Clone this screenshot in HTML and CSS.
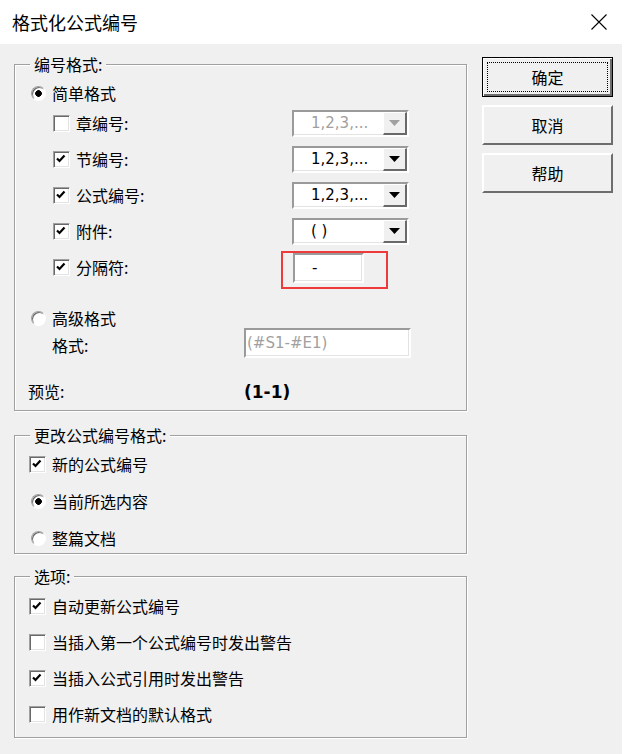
FILE: index.html
```html
<!DOCTYPE html>
<html lang="zh-CN">
<head>
  <meta charset="UTF-8">
  <title>格式化公式编号</title>
  <link rel="stylesheet" href="styles.css">
</head>
<body>
  <div class="dialog">
    <div class="titlebar">
      <span class="title">格式化公式编号</span>
      <svg class="close" width="16" height="16" viewBox="0 0 16 16">
        <path d="M0.5 0.5L15.5 15.5M15.5 0.5L0.5 15.5" stroke="#000" stroke-width="1.1" fill="none"/>
      </svg>
    </div>

    <div class="client">
      <div class="groups">

        <fieldset class="group g-format">
          <legend>编号格式:</legend>
          <div class="radio-row simple"><span class="radio on"></span>简单格式</div>

          <div class="opt-row">
            <div class="opt"><span class="check"></span>章编号:</div>
            <div class="combo disabled">
              <span class="combo-text">1,2,3,...</span>
              <span class="combo-btn"><svg width="11" height="6" viewBox="0 0 11 6"><polygon points="0,0 11,0 5.5,6"/></svg></span>
            </div>
          </div>

          <div class="opt-row">
            <div class="opt"><span class="check"><svg width="15" height="15" viewBox="0 0 15 15"><path d="M3 6.5L5.5 9L10.5 3.5"/></svg></span>节编号:</div>
            <div class="combo">
              <span class="combo-text">1,2,3,...</span>
              <span class="combo-btn"><svg width="11" height="6" viewBox="0 0 11 6"><polygon points="0,0 11,0 5.5,6"/></svg></span>
            </div>
          </div>

          <div class="opt-row">
            <div class="opt"><span class="check"><svg width="15" height="15" viewBox="0 0 15 15"><path d="M3 6.5L5.5 9L10.5 3.5"/></svg></span>公式编号:</div>
            <div class="combo">
              <span class="combo-text">1,2,3,...</span>
              <span class="combo-btn"><svg width="11" height="6" viewBox="0 0 11 6"><polygon points="0,0 11,0 5.5,6"/></svg></span>
            </div>
          </div>

          <div class="opt-row">
            <div class="opt"><span class="check"><svg width="15" height="15" viewBox="0 0 15 15"><path d="M3 6.5L5.5 9L10.5 3.5"/></svg></span>附件:</div>
            <div class="combo">
              <span class="combo-text">( )</span>
              <span class="combo-btn"><svg width="11" height="6" viewBox="0 0 11 6"><polygon points="0,0 11,0 5.5,6"/></svg></span>
            </div>
          </div>

          <div class="opt-row">
            <div class="opt"><span class="check"><svg width="15" height="15" viewBox="0 0 15 15"><path d="M3 6.5L5.5 9L10.5 3.5"/></svg></span>分隔符:</div>
            <div class="mark"><div class="textbox sep">-</div></div>
          </div>

          <div class="radio-row advanced"><span class="radio"></span>高级格式</div>
          <div class="field-row">
            <span class="field-label">格式:</span>
            <div class="textbox adv">(#S1-#E1)</div>
          </div>
          <div class="preview-row">
            <span class="preview-label">预览:</span>
            <span class="preview">(1-1)</span>
          </div>
        </fieldset>

        <fieldset class="group g-change">
          <legend>更改公式编号格式:</legend>
          <div class="row"><span class="check"><svg width="15" height="15" viewBox="0 0 15 15"><path d="M3 6.5L5.5 9L10.5 3.5"/></svg></span>新的公式编号</div>
          <div class="row"><span class="radio on"></span>当前所选内容</div>
          <div class="row"><span class="radio"></span>整篇文档</div>
        </fieldset>

        <fieldset class="group g-options">
          <legend>选项:</legend>
          <div class="row"><span class="check"><svg width="15" height="15" viewBox="0 0 15 15"><path d="M3 6.5L5.5 9L10.5 3.5"/></svg></span>自动更新公式编号</div>
          <div class="row"><span class="check"></span>当插入第一个公式编号时发出警告</div>
          <div class="row"><span class="check"><svg width="15" height="15" viewBox="0 0 15 15"><path d="M3 6.5L5.5 9L10.5 3.5"/></svg></span>当插入公式引用时发出警告</div>
          <div class="row"><span class="check"></span>用作新文档的默认格式</div>
        </fieldset>

      </div>

      <div class="buttons">
        <button class="btn default">确定</button>
        <button class="btn">取消</button>
        <button class="btn">帮助</button>
      </div>
    </div>
  </div>
</body>
</html>
```

FILE: styles.css
```css
* {
  box-sizing: border-box;
}

body {
  margin: 0;
  background: #fff;
  font-family: "Noto Sans CJK SC", sans-serif;
  font-size: 16px;
  line-height: 20px;
  color: #000;
}

.dialog {
  width: 622px;
  height: 754px;
  background: #f0f0f0;
  display: flex;
  flex-direction: column;
}

.titlebar {
  height: 44px;
  flex: none;
  background: #fff;
  display: flex;
  align-items: center;
  justify-content: space-between;
  padding: 0 15px 0 12px;
}

.title {
  font-size: 18px;
}

.close {
  display: block;
}

.client {
  flex: 1;
  display: flex;
  align-items: flex-start;
  padding-left: 14px;
}

.groups {
  width: 453px;
  display: flex;
  flex-direction: column;
}

/* group boxes */
.group {
  margin: 0;
  padding: 0;
  min-width: 0;
  border: 1px solid #a0a0a0;
  box-shadow: 1px 1px 0 #fff, inset 1px 1px 0 #fff;
}

.group legend {
  margin-left: 15px;
  padding: 0 4px;
  line-height: 20px;
  background: #f0f0f0;
}

.g-format {
  margin-top: 10px;
  padding: 7px 0 6px;
}

.g-change {
  margin-top: 14px;
  padding: 7px 0 3px;
  display: flex;
  flex-direction: column;
  gap: 13px;
}

.g-options {
  margin-top: 12px;
  padding: 8px 0 11px;
  display: flex;
  flex-direction: column;
  gap: 12px;
}

.row {
  height: 24px;
  display: flex;
  align-items: center;
  gap: 6px;
  padding-left: 14px;
}

.row .radio {
  margin-left: 2px;
}

/* first group rows */
.radio-row {
  display: flex;
  align-items: center;
  gap: 6px;
  padding-left: 16px;
}

.radio-row.simple {
  height: 24px;
}

.radio-row.advanced {
  height: 20px;
  margin-top: 23px;
}

.opt-row {
  height: 36px;
  display: flex;
  align-items: center;
}

.opt {
  width: 277px;
  flex: none;
  display: flex;
  align-items: center;
  gap: 6px;
  padding-left: 38px;
}

.field-row {
  height: 30px;
  display: flex;
  align-items: center;
}

.field-label {
  width: 229px;
  padding-left: 37px;
  padding-top: 4px;
}

.preview-row {
  height: 26px;
  margin-top: 20px;
  display: flex;
  align-items: center;
}

.preview-label {
  width: 229px;
  padding-left: 13px;
}

.preview {
  font-family: "DejaVu Sans", sans-serif;
  font-weight: bold;
  font-size: 17px;
  padding-top: 2px;
}

/* controls */
.check {
  width: 17px;
  height: 17px;
  flex: none;
  background: #fff;
  border: 1px solid;
  border-color: #a0a0a0 #fff #fff #a0a0a0;
  box-shadow: inset 1px 1px 0 #696969, inset -1px -1px 0 #e3e3e3;
}

.check svg {
  display: block;
}

.check path {
  fill: none;
  stroke: #000;
  stroke-width: 2.2;
}

.radio {
  width: 15px;
  height: 15px;
  flex: none;
  border-radius: 50%;
  background: #fff;
  border: 1px solid;
  border-color: #a0a0a0 #fff #fff #a0a0a0;
  box-shadow: inset 1px 1px 0 #696969;
}

.radio.on {
  background: radial-gradient(circle, #000 0 3px, #fff 3.6px);
}

.combo {
  width: 117px;
  height: 27px;
  display: flex;
  background: #fff;
  border: 2px solid;
  border-color: #9a9a9a #fff #fff #9a9a9a;
  box-shadow: inset -1px -1px 0 #e3e3e3;
}

.combo-text {
  flex: 1;
  padding-left: 17px;
  font-family: "DejaVu Sans", sans-serif;
  font-size: 15px;
  line-height: 23px;
}

.combo-btn {
  width: 24px;
  height: 23px;
  display: flex;
  align-items: center;
  justify-content: center;
  background: #f0f0f0;
  border-style: solid;
  border-width: 1px 2px 2px 1px;
  border-color: #fff #696969 #696969 #fff;
}

.combo-btn svg {
  display: block;
  fill: #000;
}

.combo.disabled .combo-text {
  color: #a0a0a0;
}

.combo.disabled .combo-btn svg {
  fill: #a0a0a0;
}

.textbox {
  height: 30px;
  background: #fff;
  border: 2px solid;
  border-color: #9a9a9a #fff #fff #9a9a9a;
  box-shadow: inset -1px -1px 0 #e3e3e3;
  font-family: "DejaVu Sans", sans-serif;
  font-size: 15px;
  line-height: 26px;
}

.textbox.sep {
  width: 71px;
  padding-left: 17px;
}

.textbox.adv {
  width: 167px;
  padding-left: 1px;
  color: #a0a0a0;
}

.mark {
  border: 2px solid #ee3a3a;
  padding: 0 22px 4px 10px;
  margin-left: -11px;
  margin-top: 6px;
}

/* buttons */
.buttons {
  display: flex;
  flex-direction: column;
  gap: 8px;
  margin-left: 15px;
  padding-top: 13px;
}

.btn {
  width: 131px;
  height: 40px;
  padding: 0;
  background: #f0f0f0;
  font-family: inherit;
  font-size: 16px;
  color: #000;
  border: 2px solid;
  border-color: #fff #6d6d6d #6d6d6d #fff;
}

.btn.default {
  border: 1px solid #000;
  box-shadow: inset 1px 1px 0 #fff, inset -2px -2px 0 #6d6d6d;
  outline: 1px dotted #000;
  outline-offset: -6px;
}
```
